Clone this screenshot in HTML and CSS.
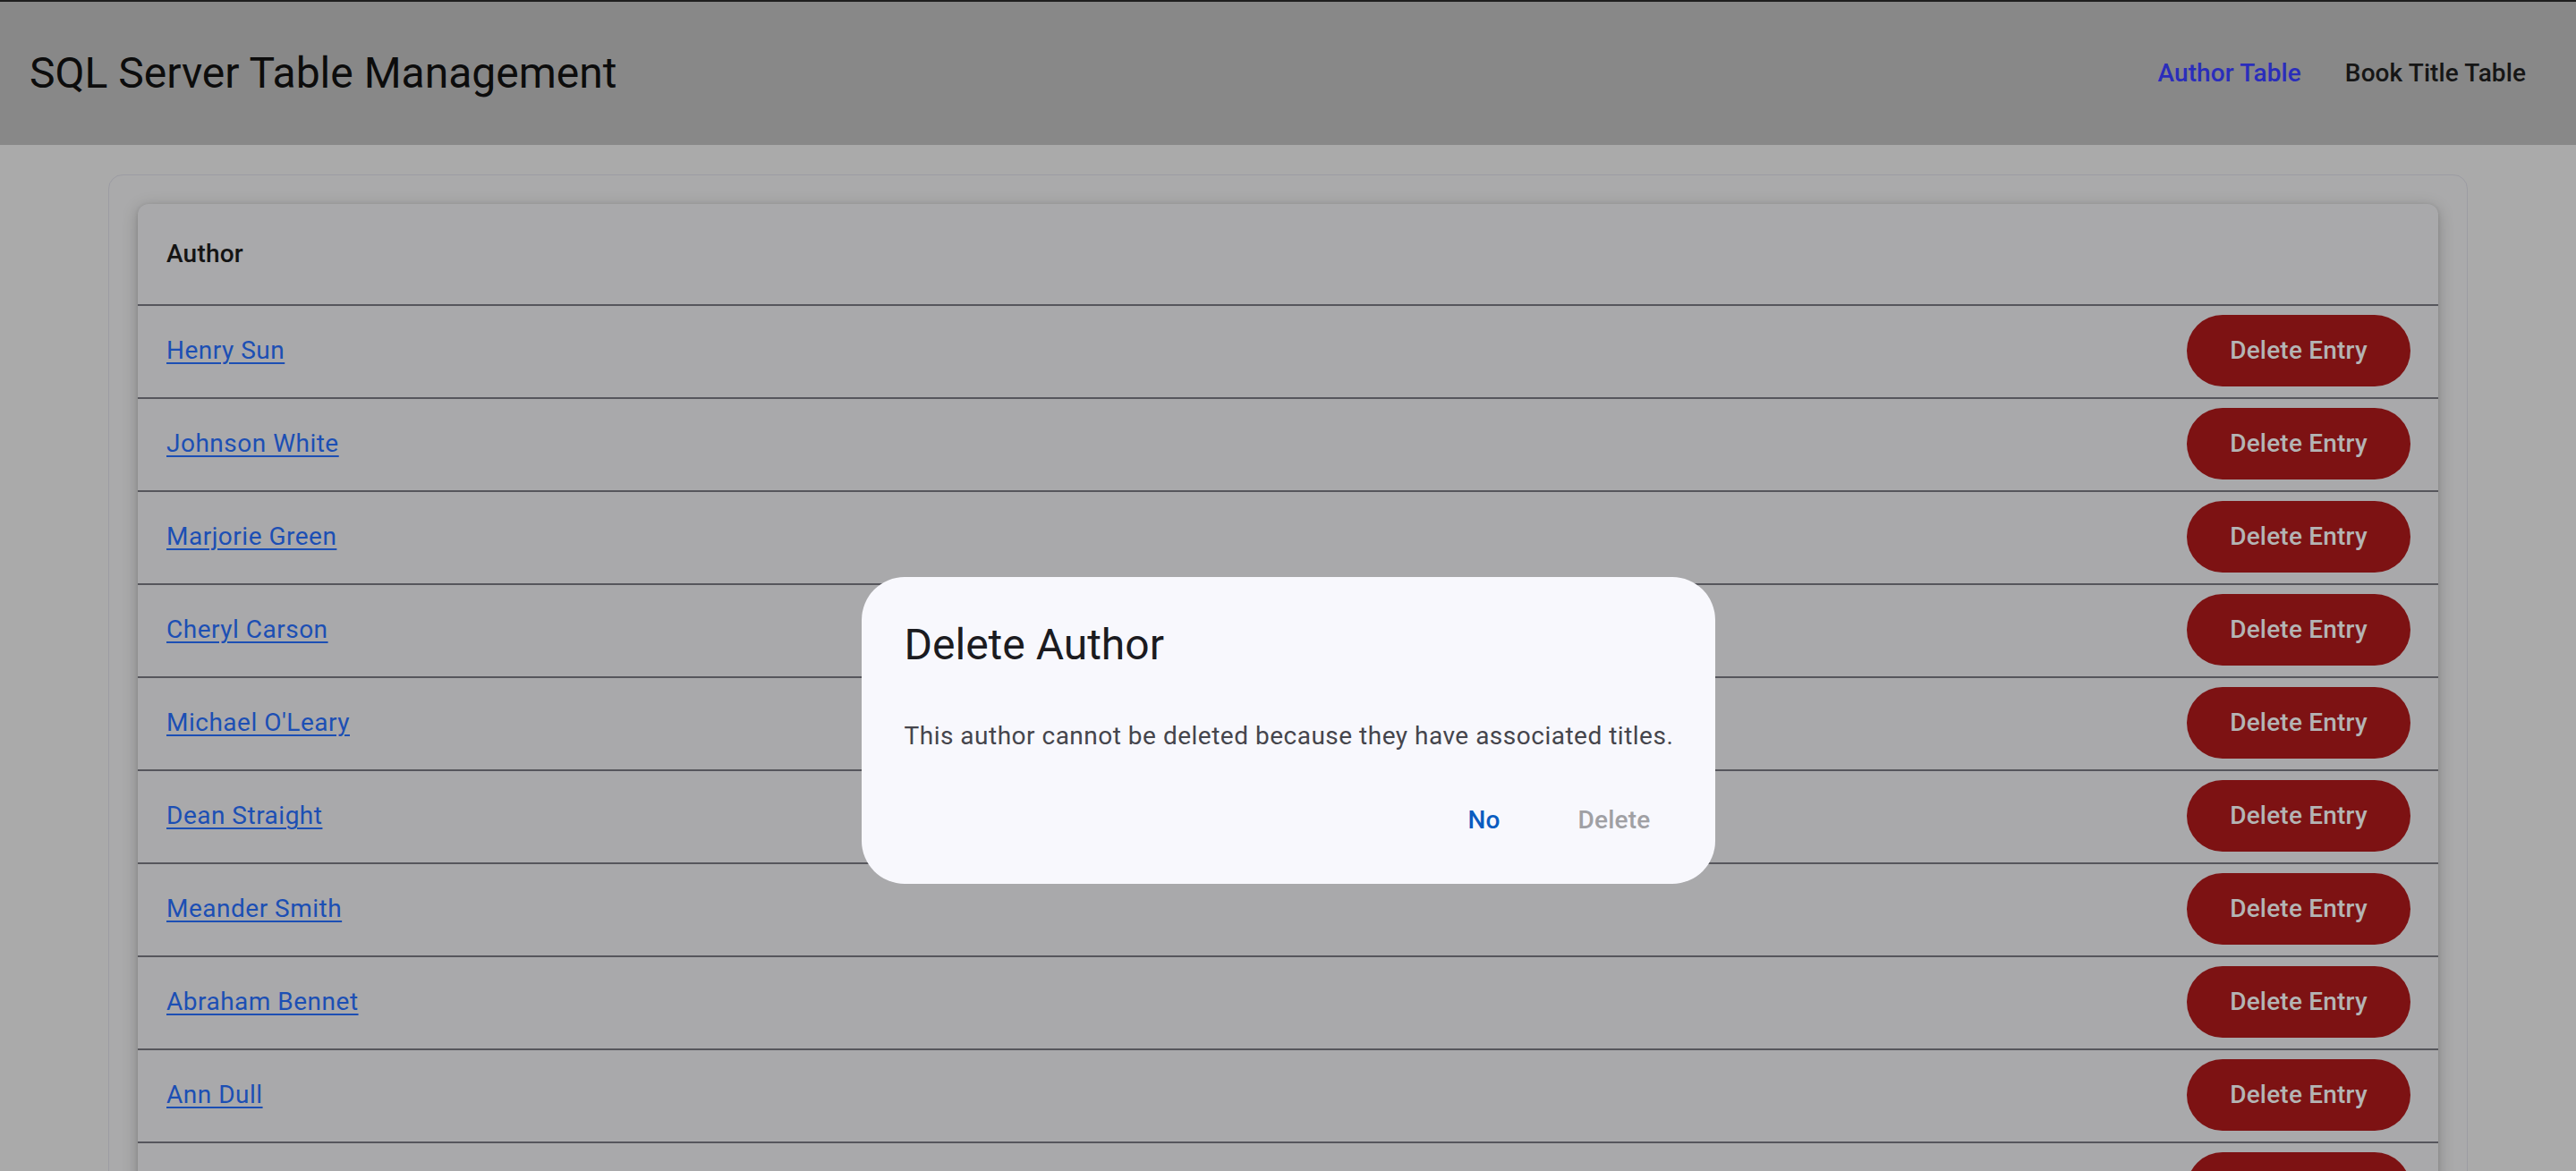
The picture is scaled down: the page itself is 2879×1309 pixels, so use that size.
FILE: index.html
```html
<!DOCTYPE html>
<html lang="en">
<head>
<meta charset="utf-8">
<title>SQL Server Table Management</title>
<link rel="stylesheet" href="styles.css">
</head>
<body>
<header class="topbar">
  <h1 class="app-title">SQL Server Table Management</h1>
  <nav class="nav">
    <a class="nav-link active" href="#">Author Table</a>
    <a class="nav-link" href="#">Book Title Table</a>
  </nav>
</header>
<main class="container">
  <section class="table-card">
    <div class="table-head">Author</div>
    <div class="row"><a class="name" href="#">Henry Sun</a><button class="del-btn">Delete Entry</button></div>
    <div class="row"><a class="name" href="#">Johnson White</a><button class="del-btn">Delete Entry</button></div>
    <div class="row"><a class="name" href="#">Marjorie Green</a><button class="del-btn">Delete Entry</button></div>
    <div class="row"><a class="name" href="#">Cheryl Carson</a><button class="del-btn">Delete Entry</button></div>
    <div class="row"><a class="name" href="#">Michael O'Leary</a><button class="del-btn">Delete Entry</button></div>
    <div class="row"><a class="name" href="#">Dean Straight</a><button class="del-btn">Delete Entry</button></div>
    <div class="row"><a class="name" href="#">Meander Smith</a><button class="del-btn">Delete Entry</button></div>
    <div class="row"><a class="name" href="#">Abraham Bennet</a><button class="del-btn">Delete Entry</button></div>
    <div class="row"><a class="name" href="#">Ann Dull</a><button class="del-btn">Delete Entry</button></div>
    <div class="row"><a class="name" href="#">Burt Gringlesby</a><button class="del-btn">Delete Entry</button></div>
    <div class="row"><a class="name" href="#">Charlene Locksley</a><button class="del-btn">Delete Entry</button></div>
  </section>
</main>
<div class="scrim">
  <div class="dialog" role="dialog">
    <h2 class="dialog-title">Delete Author</h2>
    <p class="dialog-body">This author cannot be deleted because they have associated titles.</p>
    <div class="dialog-actions">
      <button class="text-btn primary">No</button>
      <button class="text-btn disabled">Delete</button>
    </div>
  </div>
</div>
</body>
</html>
```
FILE: styles.css
```css
html, body {
  margin: 0;
  padding: 0;
  height: 100%;
  overflow: hidden;
}
body {
  background: #aaaaaa;
  font-family: Roboto, "Liberation Sans", Arial, sans-serif;
  color: #141414;
}
.topbar {
  box-sizing: border-box;
  height: 162px;
  border-top: 2px solid #1e1e1e;
  background: #888888;
  display: flex;
  align-items: center;
  justify-content: space-between;
  padding: 0 32px 0 33px;
}
.app-title {
  margin: 0;
  font-size: 48px;
  line-height: 56px;
  font-weight: 400;
  color: #0c0c0c;
}
.nav {
  display: flex;
  align-items: center;
}
.nav-link {
  font-size: 28px;
  line-height: 40px;
  font-weight: 500;
  letter-spacing: 0.1px;
  text-decoration: none;
  color: #161616;
  padding: 0 24px;
}
.nav-link.active { color: #2a2dbb; padding-right: 25px; }
.container {
  margin: 33px 121px 0;
  padding: 32px 32px 40px 32px;
  border: 1px solid #9c9ca3;
  border-radius: 16px;
  background: #aaaaab;
}
.table-card {
  background: #a9a9ab;
  border-radius: 12px;
  box-shadow: 0 4px 18px rgba(0,0,0,0.22), 0 1px 4px rgba(0,0,0,0.12);
  overflow: hidden;
}
.table-head {
  height: 114px;
  box-sizing: border-box;
  display: flex;
  align-items: center;
  padding: 0 32px;
  font-size: 28px;
  line-height: 40px;
  font-weight: 500;
  letter-spacing: 0.2px;
  color: #141414;
  border-bottom: 2px solid #56565c;
}
.row {
  height: 104px;
  box-sizing: border-box;
  display: flex;
  align-items: center;
  justify-content: space-between;
  padding: 0 31px 2px 32px;
  border-bottom: 2px solid #56565c;
}
.name {
  font-size: 28px;
  line-height: 40px;
  letter-spacing: 0.5px;
  color: #1c4fb4;
  text-decoration: underline;
  text-underline-offset: 4px;
  text-decoration-thickness: 2px;
}
.del-btn {
  width: 250px;
  height: 80px;
  border: none;
  border-radius: 40px;
  background: #7d1213;
  color: #b4b4b4;
  font-family: Roboto, "Liberation Sans", Arial, sans-serif;
  font-size: 28px;
  font-weight: 500;
  letter-spacing: 0.2px;
  line-height: 40px;
  padding: 0;
}
.scrim {
  position: fixed;
  inset: 0;
  display: flex;
  justify-content: center;
  align-items: flex-start;
  padding-top: 645px;
  box-sizing: border-box;
}
.dialog {
  width: 954px;
  height: 343px;
  box-sizing: border-box;
  background: #f8f8fd;
  border-radius: 48px;
  padding: 44px 48px 31px 48px;
  display: flex;
  flex-direction: column;
}
.dialog-title {
  margin: 0;
  font-size: 48px;
  line-height: 64px;
  font-weight: 400;
  color: #1b1b1f;
}
.dialog-body {
  margin: 50px -24px 0 0;
  font-size: 28px;
  line-height: 40px;
  letter-spacing: 0.5px;
  white-space: nowrap;
  color: #45454c;
}
.dialog-actions {
  margin-top: 34px;
  display: flex;
  justify-content: flex-end;
  gap: 39px;
}
.text-btn {
  height: 80px;
  border: none;
  background: transparent;
  padding: 0 24px;
  font-family: Roboto, "Liberation Sans", Arial, sans-serif;
  font-size: 28px;
  font-weight: 500;
  letter-spacing: 0.2px;
  line-height: 40px;
  border-radius: 40px;
}
.text-btn.primary { color: #0b5cc0; }
.text-btn.disabled { color: #a0a0a4; }
```
